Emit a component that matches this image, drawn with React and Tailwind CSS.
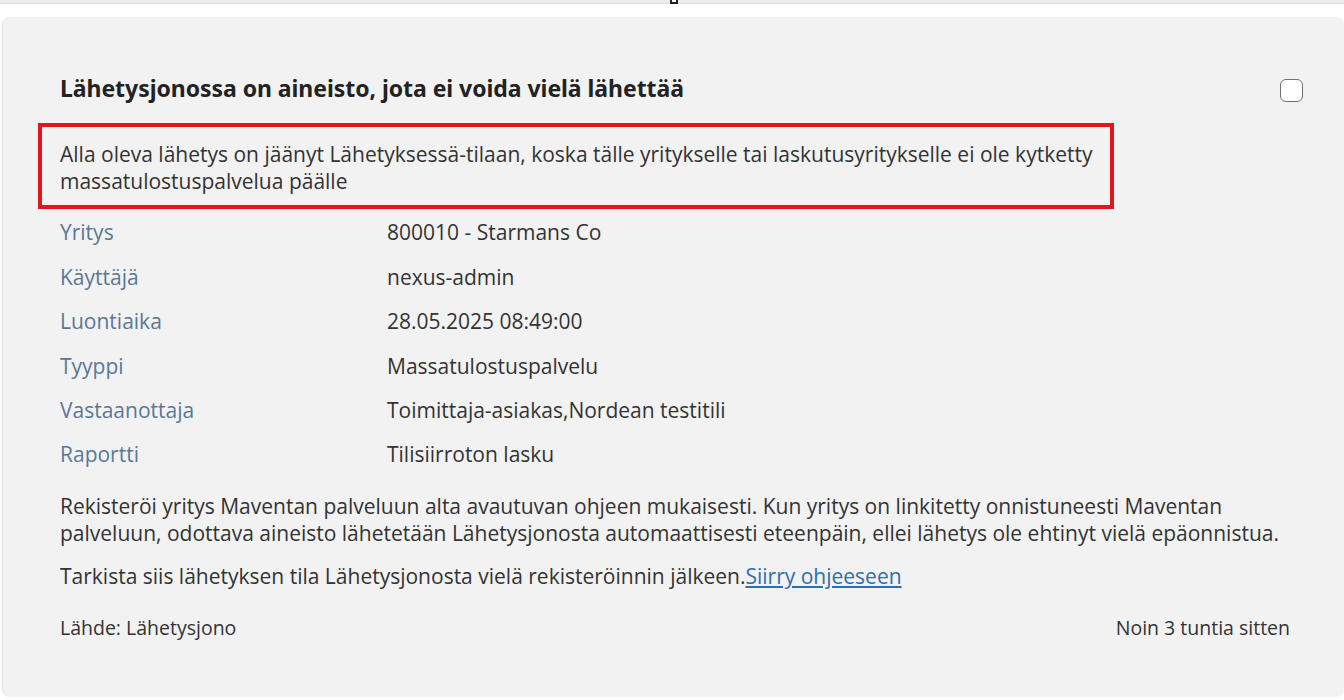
import { useState } from 'react';

const rows = [
    ['Yritys', '800010 - Starmans Co'],
    ['Käyttäjä', 'nexus-admin'],
    ['Luontiaika', '28.05.2025 08:49:00'],
    ['Tyyppi', 'Massatulostuspalvelu'],
    ['Vastaanottaja', 'Toimittaja-asiakas,Nordean testitili'],
    ['Raportti', 'Tilisiirroton lasku'],
];

export default function App() {
    const [checked, setChecked] = useState(false);

    return (
        <div className="h-[700px] overflow-hidden bg-white text-[#333] font-['Open_Sans',sans-serif]">
            {/* top strip */}
            <div className="relative h-[4px] bg-[#ebebeb] border-b border-[#dcdcdc]">
                <div className="absolute left-[670px] -top-[2px] w-[8px] h-[6px] border-2 border-[#222] bg-white" />
            </div>

            {/* card */}
            <div className="mt-[13px] ml-[2px] h-[680px] rounded-lg bg-[#f2f2f2] border-l border-[#e4e4e4] pl-[57px] pr-[54px] pt-[57px]">
                <div className="flex items-start justify-between">
                    <h2 className="text-[23px] leading-[28px] font-bold text-[#222] font-['Noto_Sans',sans-serif] tracking-[-0.05px]">
                        Lähetysjonossa on aineisto, jota ei voida vielä lähettää
                    </h2>
                    <input
                        type="checkbox"
                        checked={checked}
                        onChange={() => setChecked(!checked)}
                        className="appearance-none mt-[5px] -mr-[13px] w-[23px] h-[23px] rounded-[6px] border border-[#6f6f6f] bg-white"
                    />
                </div>

                {/* highlighted message */}
                <div className="mt-[21px] -ml-[22px] w-[1076px] border-4 border-[#e5141f] pl-[18px] pt-[14px] pb-[10px]">
                    <p className="text-[21px] leading-[27px]">
                        Alla oleva lähetys on jäänyt Lähetyksessä-tilaan, koska tälle yritykselle tai laskutusyritykselle ei ole kytketty
                        <br />
                        massatulostuspalvelua päälle
                    </p>
                </div>

                {/* details */}
                <div className="mt-[2px]">
                    {rows.map(([label, value]) => (
                        <div key={label} className="flex items-center h-[44.4px] text-[21px]">
                            <span className="w-[327px] text-[#5a7896]">{label}</span>
                            <span>{value}</span>
                        </div>
                    ))}
                </div>

                <p className="mt-[16px] text-[21px] leading-[27px]">
                    Rekisteröi yritys Maventan palveluun alta avautuvan ohjeen mukaisesti. Kun yritys on linkitetty onnistuneesti Maventan palveluun, odottava aineisto lähetetään Lähetysjonosta automaattisesti eteenpäin, ellei lähetys ole ehtinyt vielä epäonnistua.
                </p>
                <p className="mt-[16px] text-[21px] leading-[27px]">
                    Tarkista siis lähetyksen tila Lähetysjonosta vielä rekisteröinnin jälkeen.
                    <a href="#" className="text-[#2d6fae] underline underline-offset-2">Siirry ohjeeseen</a>
                </p>

                <div className="mt-[26px] flex justify-between text-[19.5px] leading-[24px]">
                    <span>Lähde: Lähetysjono</span>
                    <span>Noin 3 tuntia sitten</span>
                </div>
            </div>
        </div>
    );
}
